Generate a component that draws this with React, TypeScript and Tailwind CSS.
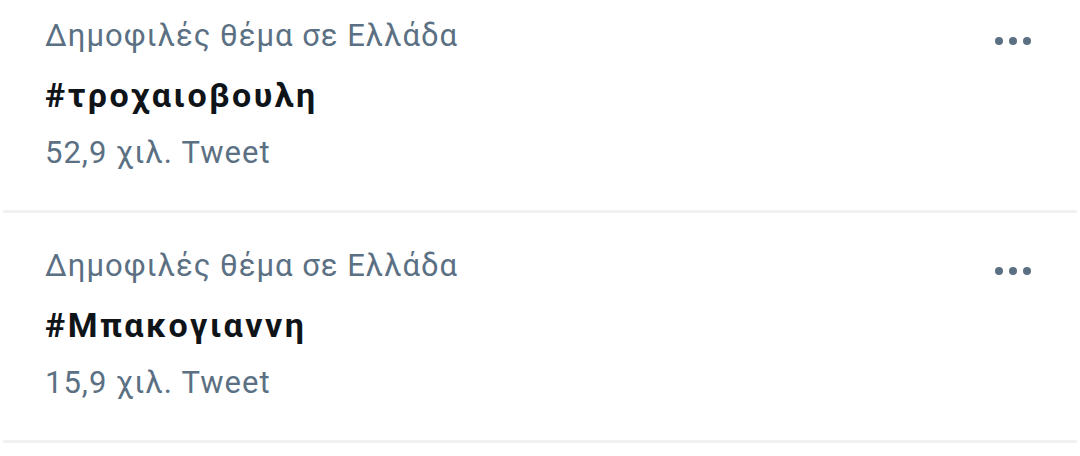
import React from "react";

type Trend = { tag: string; count: string };

const trends: Trend[] = [
  { tag: "#τροχαιοβουλη", count: "52,9 χιλ. Tweet" },
  { tag: "#Μπακογιαννη", count: "15,9 χιλ. Tweet" },
];

function Dots() {
  return (
    <div className="flex items-center gap-[6px]">
      <span className="block h-[8px] w-[8px] rounded-full bg-[#5b7083]" />
      <span className="block h-[8px] w-[8px] rounded-full bg-[#5b7083]" />
      <span className="block h-[8px] w-[8px] rounded-full bg-[#5b7083]" />
    </div>
  );
}

function TrendRow({ trend, first }: { trend: Trend; first: boolean }) {
  return (
    <div>
      <div
        className={`flex justify-between pl-[45px] pr-[49px] pb-[37px] ${
          first ? "pt-[16px]" : "pt-[33px]"
        }`}
      >
        <div className="flex flex-col">
          <div className="text-[31px] leading-[40px] tracking-[1px] text-[#5b7083]">
            Δημοφιλές θέμα σε Ελλάδα
          </div>
          <div className="mt-[19px] text-[34px] font-bold leading-[40px] tracking-[2.5px] text-[#0f1419]">
            {trend.tag}
          </div>
          <div className="mt-[18px] text-[31px] leading-[40px] tracking-[1px] text-[#5b7083]">
            {trend.count}
          </div>
        </div>
        <div className="-mt-[2px] flex h-[54px] items-center">
          <Dots />
        </div>
      </div>
      <div className="mx-[3px] h-[3px] bg-[#eff1f2]" />
    </div>
  );
}

export default function App() {
  return (
    <div
      className="h-[456px] w-[1080px] overflow-hidden bg-white"
      style={{ fontFamily: "Roboto, 'Noto Sans', sans-serif" }}
    >
      {trends.map((t, i) => (
        <TrendRow key={t.tag} trend={t} first={i === 0} />
      ))}
    </div>
  );
}
